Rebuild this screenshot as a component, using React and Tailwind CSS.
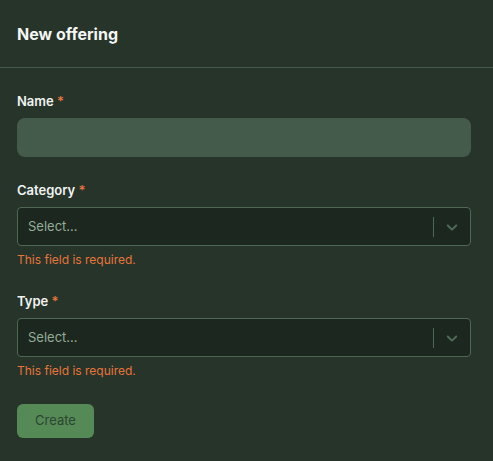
import React from 'react';

const Label = ({ children }) => (
  <label className="block text-[13px] font-semibold text-[#f1f3f1] leading-4 mb-[9px]">
    {children} <span className="text-[#e8743a]">*</span>
  </label>
);

const SelectBox = () => (
  <div className="flex items-center h-[39px] rounded-[4px] border border-[#4e6853] bg-[#1b271f]">
    <span className="flex-1 pl-[10px] text-[13px] text-[#95ac97]">Select...</span>
    <span className="w-px h-[20px] bg-[#4e6853]" />
    <span className="w-[36px] flex items-center justify-center text-[#4f6a55]">
      <svg width="18" height="18" viewBox="0 0 20 20" fill="currentColor">
        <path d="M4.516 7.548c0.436-0.446 1.043-0.481 1.576 0l3.908 3.747 3.908-3.747c0.533-0.481 1.141-0.446 1.574 0 0.436 0.445 0.408 1.197 0 1.615-0.406 0.418-4.695 4.502-4.695 4.502-0.217 0.223-0.502 0.335-0.787 0.335s-0.57-0.112-0.789-0.335c0 0-4.287-4.084-4.695-4.502s-0.436-1.17 0-1.615z" />
      </svg>
    </span>
  </div>
);

const ErrorText = () => (
  <p className="mt-[6px] text-[12px] leading-4 text-[#e8743a]">This field is required.</p>
);

export default function App() {
  return (
    <div
      className="w-[493px] h-[461px] bg-[#26342a] overflow-hidden"
      style={{ fontFamily: 'Inter, "Noto Sans", sans-serif' }}
    >
      <div className="h-[68px] flex items-center px-[17px] border-b border-[#44594a]">
        <h2 className="text-[16px] font-bold text-[#f4f6f4]">New offering</h2>
      </div>
      <form className="pl-[17px] pr-[22px] pt-[25px]">
        <div>
          <Label>Name</Label>
          <input
            type="text"
            className="w-full h-[39px] rounded-[8px] bg-[#445a4b] outline-none px-3 text-white"
          />
        </div>
        <div className="mt-[25px]">
          <Label>Category</Label>
          <SelectBox />
          <ErrorText />
        </div>
        <div className="mt-[25px]">
          <Label>Type</Label>
          <SelectBox />
          <ErrorText />
        </div>
        <button
          type="button"
          className="mt-[25px] w-[77px] h-[34px] rounded-[6px] bg-[#558a56] text-[13px] text-[#2c4631]"
        >
          Create
        </button>
      </form>
    </div>
  );
}
